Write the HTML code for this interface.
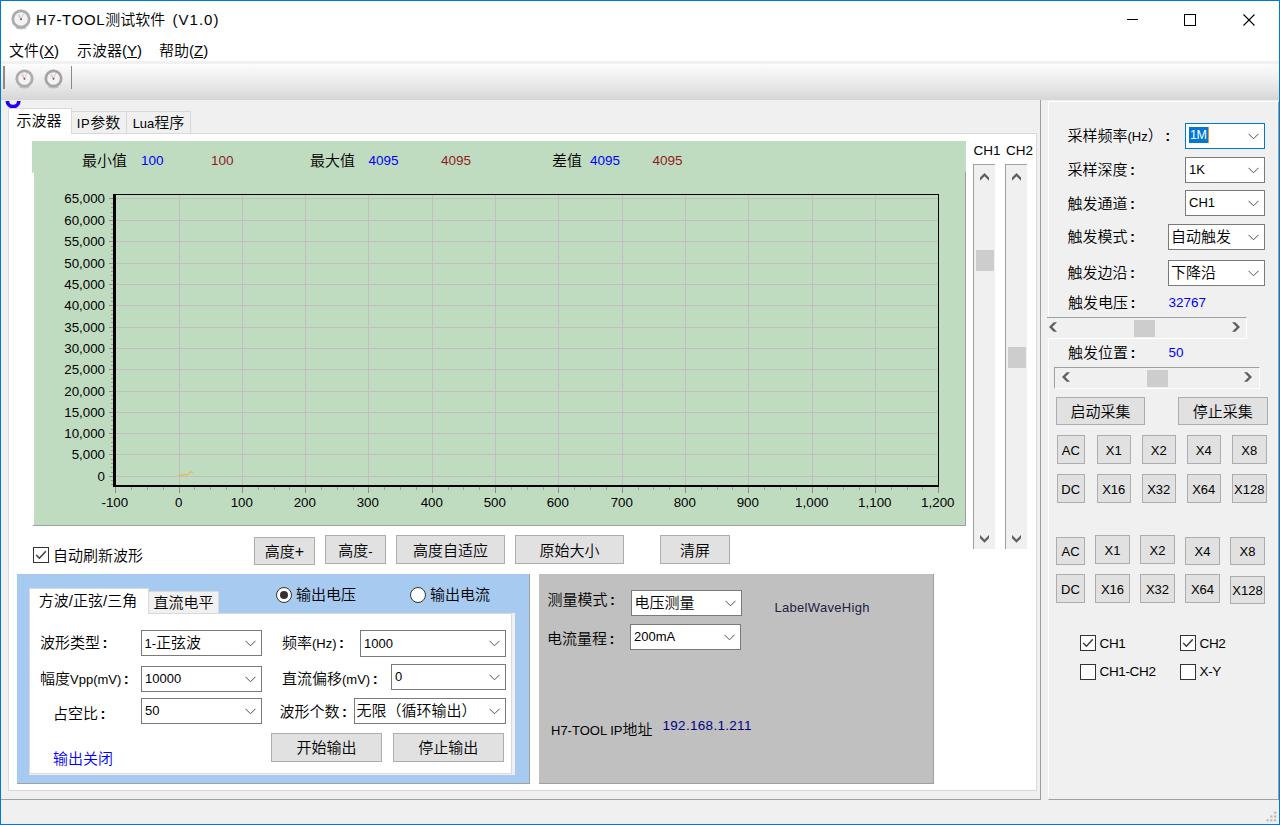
<!DOCTYPE html>
<html lang="zh-CN"><head><meta charset="utf-8"><title>H7-TOOL测试软件 (V1.0)</title>
<style>
*{box-sizing:border-box;margin:0;padding:0}
html,body{width:1280px;height:825px;overflow:hidden;background:#fff}
body{font-weight:350;font-family:"Liberation Sans","Noto Sans CJK SC",sans-serif;color:#000}
#win{position:absolute;left:0;top:0;width:1280px;height:825px;overflow:hidden;background:#fff}
.a{position:absolute}
.t{position:absolute;white-space:nowrap;font-size:15px;line-height:20px;height:20px}
.t i{font-style:normal;font-size:13px}
.t em{font-style:normal;font-size:15px;margin-left:2.5px;font-weight:bold}
.n{position:absolute;white-space:nowrap;font-size:13.5px;line-height:20px;height:20px}
.btn{position:absolute;background:#e1e1e1;border:1px solid #adadad;text-align:center;white-space:nowrap;font-size:15px}
.btn i{font-style:normal;font-size:13px}
.cb{position:absolute;background:#fff;border:1px solid #7a7a7a;white-space:nowrap;font-size:15px;padding-left:3px}
.cb i{font-style:normal;font-size:13px}
.cb svg{position:absolute;right:5px;top:50%;margin-top:-3px}
.chk{position:absolute;width:16px;height:16px;border:1px solid #333;background:#fff}
.rad{position:absolute;width:16px;height:16px;border:1px solid #333;background:#fff;border-radius:50%}
.rad b{position:absolute;left:3px;top:3px;width:8px;height:8px;border-radius:50%;background:#333}
.tab{position:absolute;border:1px solid #d9d9d9;background:#f0f0f0;font-size:15px;white-space:nowrap;text-align:center}
.tab.on{background:#fff;border-bottom:none}
</style></head><body>
<div id="win">
<svg class="a" style="left:11px;top:9.1px" width="20" height="21" viewBox="0 0 20 21"><ellipse cx="10.0" cy="18.8" rx="5.5" ry="1.6" fill="#b4b4b4" opacity=".75"/><circle cx="10.0" cy="10.0" r="9.7" fill="#c8c8c8" opacity=".55"/><circle cx="10.0" cy="10.0" r="8.15" fill="#f3f3f3" stroke="#acacac" stroke-width="2.7"/><path d="M10.0 10.3 L7.9 5.0" stroke="#c9c9c9" stroke-width="1" fill="none"/><path d="M10.0 10.3 L12.5 4.6" stroke="#cfcfcf" stroke-width="1" fill="none"/><path d="M10.3 10.5 L6.4 6.0" stroke="#c07080" stroke-width="0.5" fill="none" opacity=".7"/><circle cx="10.0" cy="10.2" r="0.95" fill="#8a4050"/></svg><div class="t" style="left:36px;top:9.5px;font-size:15px"><span style="letter-spacing:0.65px">H7-TOOL</span>测试软件<span style="margin-left:7.3px;letter-spacing:1px">(V1.0)</span></div>
<svg class="a" style="left:1110px;top:1px" width="169" height="38" viewBox="0 0 169 38" shape-rendering="crispEdges"><path d="M17 18.5 H28" stroke="#000" stroke-width="1"/><rect x="74.5" y="13.5" width="11" height="11" fill="none" stroke="#000" stroke-width="1"/><path d="M133.5 13.5 L144.5 24.5 M144.5 13.5 L133.5 24.5" stroke="#000" stroke-width="1.1" shape-rendering="auto"/></svg>
<div class="t" style="left:9px;top:40.5px;">文件(<u>X</u>)</div>
<div class="t" style="left:77px;top:40.5px;">示波器(<u>Y</u>)</div>
<div class="t" style="left:159px;top:40.5px;">帮助(<u>Z</u>)</div>
<div class="a" style="left:1px;top:61px;width:1278px;height:3px;background:#f1f1f1"></div>
<div class="a" style="left:1px;top:64px;width:1278px;height:36px;background:linear-gradient(#fcfcfc 0%,#f1f1f1 35%,#e4e4e4 68%,#d6d6d6 100%)"></div>
<div class="a" style="left:3px;top:66px;width:2px;height:23px;background:#8a8a8a"></div>
<div class="a" style="left:71px;top:66px;width:1px;height:23px;background:#8a8a8a"></div>
<svg class="a" style="left:15.2px;top:69.3px" width="19" height="20" viewBox="0 0 19 20"><ellipse cx="9.5" cy="17.8" rx="5.2250000000000005" ry="1.6" fill="#b4b4b4" opacity=".75"/><circle cx="9.5" cy="9.5" r="9.2" fill="#c8c8c8" opacity=".55"/><circle cx="9.5" cy="9.5" r="7.65" fill="#f3f3f3" stroke="#acacac" stroke-width="2.7"/><path d="M9.5 9.8 L7.4 4.5" stroke="#c9c9c9" stroke-width="1" fill="none"/><path d="M9.5 9.8 L12.0 4.1" stroke="#cfcfcf" stroke-width="1" fill="none"/><path d="M9.8 10.0 L5.9 5.5" stroke="#c07080" stroke-width="0.5" fill="none" opacity=".7"/><circle cx="9.5" cy="9.7" r="0.95" fill="#8a4050"/></svg><svg class="a" style="left:43.6px;top:69.3px" width="19" height="20" viewBox="0 0 19 20"><ellipse cx="9.5" cy="17.8" rx="5.2250000000000005" ry="1.6" fill="#b4b4b4" opacity=".75"/><circle cx="9.5" cy="9.5" r="9.2" fill="#c8c8c8" opacity=".55"/><circle cx="9.5" cy="9.5" r="7.65" fill="#f3f3f3" stroke="#a4a4a4" stroke-width="2.7"/><path d="M9.5 9.8 L7.4 4.5" stroke="#c9c9c9" stroke-width="1" fill="none"/><path d="M9.5 9.8 L12.0 4.1" stroke="#cfcfcf" stroke-width="1" fill="none"/><path d="M9.8 10.0 L5.9 5.5" stroke="#c07080" stroke-width="0.5" fill="none" opacity=".7"/><circle cx="9.5" cy="9.7" r="0.95" fill="#8a4050"/></svg><div class="a" style="left:1px;top:100px;width:1278px;height:724px;background:#f0f0f0"></div>
<div class="a" style="left:1px;top:100px;width:1040px;height:700px;background:#f0f0f0;border-right:1px solid #a0a0a0;border-bottom:1px solid #a0a0a0"></div>
<svg class="a" style="left:4px;top:101px" width="20" height="10" viewBox="0 0 20 10"><circle cx="9.1" cy="0" r="5.7" fill="none" stroke="#2000ff" stroke-width="3.7"/></svg>
<div class="a" style="left:8px;top:133px;width:1029px;height:658px;background:#fff;border:1px solid #d9d9d9"></div>
<div class="tab on" style="left:8px;top:108px;width:64px;height:26px;line-height:23px;text-indent:-2px">示波器</div>
<div class="tab" style="left:71px;top:111px;width:56px;height:23px;line-height:21px;border-bottom:1px solid #d9d9d9;text-indent:-1px"><i style="font-style:normal;font-size:13px;letter-spacing:0.5px">IP</i>参数</div>
<div class="tab" style="left:126px;top:111px;width:65px;height:23px;line-height:21px;border-bottom:1px solid #d9d9d9"><i style="font-style:normal;font-size:13px">Lua</i>程序</div>
<div class="a" style="left:32px;top:141px;width:934px;height:32px;background:#c0dcc0"></div>
<div class="t" style="left:82px;top:150.5px;">最小值</div>
<div class="n" style="left:141px;top:150.5px;color:#0000ff">100</div>
<div class="n" style="left:211px;top:150.5px;color:#8e1c1c">100</div>
<div class="t" style="left:310px;top:150.5px;">最大值</div>
<div class="n" style="left:368.5px;top:150.5px;color:#0000ff">4095</div>
<div class="n" style="left:441px;top:150.5px;color:#8e1c1c">4095</div>
<div class="t" style="left:552px;top:150.5px;">差值</div>
<div class="n" style="left:590px;top:150.5px;color:#0000ff">4095</div>
<div class="n" style="left:652.5px;top:150.5px;color:#8e1c1c">4095</div>
<svg class="a" style="left:33px;top:172px" width="933" height="354" viewBox="33 172 933 354" shape-rendering="crispEdges" font-family="Liberation Sans, sans-serif" font-size="13.33"><rect x="33" y="172" width="933" height="354" fill="#c0dcc0"/><rect x="33" y="172" width="1" height="354" fill="#fff"/><rect x="965" y="172" width="1" height="354" fill="#a0a0a0"/><rect x="33" y="525" width="933" height="1" fill="#a0a0a0"/><rect x="116" y="476" width="822" height="1" fill="#c0c0c0"/><rect x="116" y="454" width="822" height="1" fill="#c0c0c0"/><rect x="116" y="433" width="822" height="1" fill="#c0c0c0"/><rect x="116" y="412" width="822" height="1" fill="#c0c0c0"/><rect x="116" y="391" width="822" height="1" fill="#c0c0c0"/><rect x="116" y="369" width="822" height="1" fill="#c0c0c0"/><rect x="116" y="348" width="822" height="1" fill="#c0c0c0"/><rect x="116" y="327" width="822" height="1" fill="#c0c0c0"/><rect x="116" y="305" width="822" height="1" fill="#c0c0c0"/><rect x="116" y="284" width="822" height="1" fill="#c0c0c0"/><rect x="116" y="263" width="822" height="1" fill="#c0c0c0"/><rect x="116" y="241" width="822" height="1" fill="#c0c0c0"/><rect x="116" y="220" width="822" height="1" fill="#c0c0c0"/><rect x="116" y="198" width="822" height="1" fill="#c0c0c0"/><rect x="179" y="195" width="1" height="290" fill="#c0c0c0"/><rect x="242" y="195" width="1" height="290" fill="#c0c0c0"/><rect x="305" y="195" width="1" height="290" fill="#c0c0c0"/><rect x="368" y="195" width="1" height="290" fill="#c0c0c0"/><rect x="432" y="195" width="1" height="290" fill="#c0c0c0"/><rect x="495" y="195" width="1" height="290" fill="#c0c0c0"/><rect x="558" y="195" width="1" height="290" fill="#c0c0c0"/><rect x="622" y="195" width="1" height="290" fill="#c0c0c0"/><rect x="685" y="195" width="1" height="290" fill="#c0c0c0"/><rect x="748" y="195" width="1" height="290" fill="#c0c0c0"/><rect x="812" y="195" width="1" height="290" fill="#c0c0c0"/><rect x="875" y="195" width="1" height="290" fill="#c0c0c0"/><rect x="938" y="195" width="1" height="290" fill="#c0c0c0"/><rect x="113" y="194" width="826" height="1" fill="#000"/><rect x="938" y="194" width="1" height="292" fill="#000"/><rect x="113" y="194" width="3" height="293" fill="#000"/><rect x="113" y="485" width="826" height="2" fill="#000"/><rect x="109" y="476" width="4" height="1" fill="#8c8c8c"/><text x="105" y="481.1" text-anchor="end" fill="#000">0</text><rect x="109" y="454" width="4" height="1" fill="#8c8c8c"/><text x="105" y="459.1" text-anchor="end" fill="#000">5,000</text><rect x="109" y="433" width="4" height="1" fill="#8c8c8c"/><text x="105" y="438.1" text-anchor="end" fill="#000">10,000</text><rect x="109" y="412" width="4" height="1" fill="#8c8c8c"/><text x="105" y="417.1" text-anchor="end" fill="#000">15,000</text><rect x="109" y="391" width="4" height="1" fill="#8c8c8c"/><text x="105" y="396.1" text-anchor="end" fill="#000">20,000</text><rect x="109" y="369" width="4" height="1" fill="#8c8c8c"/><text x="105" y="374.1" text-anchor="end" fill="#000">25,000</text><rect x="109" y="348" width="4" height="1" fill="#8c8c8c"/><text x="105" y="353.1" text-anchor="end" fill="#000">30,000</text><rect x="109" y="327" width="4" height="1" fill="#8c8c8c"/><text x="105" y="332.1" text-anchor="end" fill="#000">35,000</text><rect x="109" y="305" width="4" height="1" fill="#8c8c8c"/><text x="105" y="310.1" text-anchor="end" fill="#000">40,000</text><rect x="109" y="284" width="4" height="1" fill="#8c8c8c"/><text x="105" y="289.1" text-anchor="end" fill="#000">45,000</text><rect x="109" y="263" width="4" height="1" fill="#8c8c8c"/><text x="105" y="268.1" text-anchor="end" fill="#000">50,000</text><rect x="109" y="241" width="4" height="1" fill="#8c8c8c"/><text x="105" y="246.1" text-anchor="end" fill="#000">55,000</text><rect x="109" y="220" width="4" height="1" fill="#8c8c8c"/><text x="105" y="225.1" text-anchor="end" fill="#000">60,000</text><rect x="109" y="198" width="4" height="1" fill="#8c8c8c"/><text x="105" y="203.1" text-anchor="end" fill="#000">65,000</text><rect x="111" y="484" width="2" height="1" fill="#9c9c9c"/><rect x="111" y="480" width="2" height="1" fill="#9c9c9c"/><rect x="111" y="472" width="2" height="1" fill="#9c9c9c"/><rect x="111" y="467" width="2" height="1" fill="#9c9c9c"/><rect x="111" y="463" width="2" height="1" fill="#9c9c9c"/><rect x="111" y="459" width="2" height="1" fill="#9c9c9c"/><rect x="111" y="450" width="2" height="1" fill="#9c9c9c"/><rect x="111" y="446" width="2" height="1" fill="#9c9c9c"/><rect x="111" y="442" width="2" height="1" fill="#9c9c9c"/><rect x="111" y="437" width="2" height="1" fill="#9c9c9c"/><rect x="111" y="429" width="2" height="1" fill="#9c9c9c"/><rect x="111" y="425" width="2" height="1" fill="#9c9c9c"/><rect x="111" y="420" width="2" height="1" fill="#9c9c9c"/><rect x="111" y="416" width="2" height="1" fill="#9c9c9c"/><rect x="111" y="408" width="2" height="1" fill="#9c9c9c"/><rect x="111" y="403" width="2" height="1" fill="#9c9c9c"/><rect x="111" y="399" width="2" height="1" fill="#9c9c9c"/><rect x="111" y="395" width="2" height="1" fill="#9c9c9c"/><rect x="111" y="386" width="2" height="1" fill="#9c9c9c"/><rect x="111" y="382" width="2" height="1" fill="#9c9c9c"/><rect x="111" y="378" width="2" height="1" fill="#9c9c9c"/><rect x="111" y="374" width="2" height="1" fill="#9c9c9c"/><rect x="111" y="365" width="2" height="1" fill="#9c9c9c"/><rect x="111" y="361" width="2" height="1" fill="#9c9c9c"/><rect x="111" y="356" width="2" height="1" fill="#9c9c9c"/><rect x="111" y="352" width="2" height="1" fill="#9c9c9c"/><rect x="111" y="344" width="2" height="1" fill="#9c9c9c"/><rect x="111" y="339" width="2" height="1" fill="#9c9c9c"/><rect x="111" y="335" width="2" height="1" fill="#9c9c9c"/><rect x="111" y="331" width="2" height="1" fill="#9c9c9c"/><rect x="111" y="322" width="2" height="1" fill="#9c9c9c"/><rect x="111" y="318" width="2" height="1" fill="#9c9c9c"/><rect x="111" y="314" width="2" height="1" fill="#9c9c9c"/><rect x="111" y="310" width="2" height="1" fill="#9c9c9c"/><rect x="111" y="301" width="2" height="1" fill="#9c9c9c"/><rect x="111" y="297" width="2" height="1" fill="#9c9c9c"/><rect x="111" y="293" width="2" height="1" fill="#9c9c9c"/><rect x="111" y="288" width="2" height="1" fill="#9c9c9c"/><rect x="111" y="280" width="2" height="1" fill="#9c9c9c"/><rect x="111" y="275" width="2" height="1" fill="#9c9c9c"/><rect x="111" y="271" width="2" height="1" fill="#9c9c9c"/><rect x="111" y="267" width="2" height="1" fill="#9c9c9c"/><rect x="111" y="258" width="2" height="1" fill="#9c9c9c"/><rect x="111" y="254" width="2" height="1" fill="#9c9c9c"/><rect x="111" y="250" width="2" height="1" fill="#9c9c9c"/><rect x="111" y="246" width="2" height="1" fill="#9c9c9c"/><rect x="111" y="237" width="2" height="1" fill="#9c9c9c"/><rect x="111" y="233" width="2" height="1" fill="#9c9c9c"/><rect x="111" y="229" width="2" height="1" fill="#9c9c9c"/><rect x="111" y="224" width="2" height="1" fill="#9c9c9c"/><rect x="111" y="216" width="2" height="1" fill="#9c9c9c"/><rect x="111" y="212" width="2" height="1" fill="#9c9c9c"/><rect x="111" y="207" width="2" height="1" fill="#9c9c9c"/><rect x="111" y="203" width="2" height="1" fill="#9c9c9c"/><rect x="115" y="487" width="1" height="6" fill="#8c8c8c"/><text x="114.8" y="507.4" text-anchor="middle" fill="#000">-100</text><rect x="179" y="487" width="1" height="6" fill="#8c8c8c"/><text x="178.8" y="507.4" text-anchor="middle" fill="#000">0</text><rect x="242" y="487" width="1" height="6" fill="#8c8c8c"/><text x="241.8" y="507.4" text-anchor="middle" fill="#000">100</text><rect x="305" y="487" width="1" height="6" fill="#8c8c8c"/><text x="304.8" y="507.4" text-anchor="middle" fill="#000">200</text><rect x="368" y="487" width="1" height="6" fill="#8c8c8c"/><text x="367.8" y="507.4" text-anchor="middle" fill="#000">300</text><rect x="432" y="487" width="1" height="6" fill="#8c8c8c"/><text x="431.8" y="507.4" text-anchor="middle" fill="#000">400</text><rect x="495" y="487" width="1" height="6" fill="#8c8c8c"/><text x="494.8" y="507.4" text-anchor="middle" fill="#000">500</text><rect x="558" y="487" width="1" height="6" fill="#8c8c8c"/><text x="557.8" y="507.4" text-anchor="middle" fill="#000">600</text><rect x="622" y="487" width="1" height="6" fill="#8c8c8c"/><text x="621.8" y="507.4" text-anchor="middle" fill="#000">700</text><rect x="685" y="487" width="1" height="6" fill="#8c8c8c"/><text x="684.8" y="507.4" text-anchor="middle" fill="#000">800</text><rect x="748" y="487" width="1" height="6" fill="#8c8c8c"/><text x="747.8" y="507.4" text-anchor="middle" fill="#000">900</text><rect x="812" y="487" width="1" height="6" fill="#8c8c8c"/><text x="811.8" y="507.4" text-anchor="middle" fill="#000">1,000</text><rect x="875" y="487" width="1" height="6" fill="#8c8c8c"/><text x="874.8" y="507.4" text-anchor="middle" fill="#000">1,100</text><rect x="938" y="487" width="1" height="6" fill="#8c8c8c"/><text x="937.8" y="507.4" text-anchor="middle" fill="#000">1,200</text><rect x="131" y="487" width="1" height="3" fill="#9c9c9c"/><rect x="147" y="487" width="1" height="3" fill="#9c9c9c"/><rect x="163" y="487" width="1" height="3" fill="#9c9c9c"/><rect x="194" y="487" width="1" height="3" fill="#9c9c9c"/><rect x="210" y="487" width="1" height="3" fill="#9c9c9c"/><rect x="226" y="487" width="1" height="3" fill="#9c9c9c"/><rect x="258" y="487" width="1" height="3" fill="#9c9c9c"/><rect x="274" y="487" width="1" height="3" fill="#9c9c9c"/><rect x="289" y="487" width="1" height="3" fill="#9c9c9c"/><rect x="321" y="487" width="1" height="3" fill="#9c9c9c"/><rect x="337" y="487" width="1" height="3" fill="#9c9c9c"/><rect x="353" y="487" width="1" height="3" fill="#9c9c9c"/><rect x="384" y="487" width="1" height="3" fill="#9c9c9c"/><rect x="400" y="487" width="1" height="3" fill="#9c9c9c"/><rect x="416" y="487" width="1" height="3" fill="#9c9c9c"/><rect x="448" y="487" width="1" height="3" fill="#9c9c9c"/><rect x="463" y="487" width="1" height="3" fill="#9c9c9c"/><rect x="479" y="487" width="1" height="3" fill="#9c9c9c"/><rect x="511" y="487" width="1" height="3" fill="#9c9c9c"/><rect x="527" y="487" width="1" height="3" fill="#9c9c9c"/><rect x="543" y="487" width="1" height="3" fill="#9c9c9c"/><rect x="574" y="487" width="1" height="3" fill="#9c9c9c"/><rect x="590" y="487" width="1" height="3" fill="#9c9c9c"/><rect x="606" y="487" width="1" height="3" fill="#9c9c9c"/><rect x="638" y="487" width="1" height="3" fill="#9c9c9c"/><rect x="653" y="487" width="1" height="3" fill="#9c9c9c"/><rect x="669" y="487" width="1" height="3" fill="#9c9c9c"/><rect x="701" y="487" width="1" height="3" fill="#9c9c9c"/><rect x="717" y="487" width="1" height="3" fill="#9c9c9c"/><rect x="732" y="487" width="1" height="3" fill="#9c9c9c"/><rect x="764" y="487" width="1" height="3" fill="#9c9c9c"/><rect x="780" y="487" width="1" height="3" fill="#9c9c9c"/><rect x="796" y="487" width="1" height="3" fill="#9c9c9c"/><rect x="827" y="487" width="1" height="3" fill="#9c9c9c"/><rect x="843" y="487" width="1" height="3" fill="#9c9c9c"/><rect x="859" y="487" width="1" height="3" fill="#9c9c9c"/><rect x="891" y="487" width="1" height="3" fill="#9c9c9c"/><rect x="907" y="487" width="1" height="3" fill="#9c9c9c"/><rect x="922" y="487" width="1" height="3" fill="#9c9c9c"/><path d="M178.7 474.3 L180 476.2 L181.5 475 L187.5 474.8 L189.5 473 L191.3 471.6 L193.2 473.6" fill="none" stroke="#ffa500" stroke-width="0.9" shape-rendering="auto"/></svg>
<div class="n" style="left:973.5px;top:140.5px;">CH1</div>
<div class="n" style="left:1006px;top:140.5px;">CH2</div>
<div class="a" style="left:973px;top:164px;width:22px;height:385px;background:#f0f0f0;border-left:1px solid #a0a0a0;border-top:1px solid #a0a0a0"></div>
<div class="a" style="left:976px;top:250px;width:18px;height:21px;background:#cdcdcd"></div>
<svg class="a" style="left:980px;top:172.5px" width="9" height="8" viewBox="0 0 9 8"><polygon points="4.5,0 9,4.5 9,7.8 4.5,3.3 0,7.8 0,4.5" fill="#606060"/></svg><svg class="a" style="left:980px;top:535px" width="9" height="8" viewBox="0 0 9 8"><polygon points="4.5,7.8 9,3.3 9,0 4.5,4.5 0,0 0,3.3" fill="#606060"/></svg><div class="a" style="left:1005px;top:164px;width:22px;height:385px;background:#f0f0f0;border-left:1px solid #a0a0a0;border-top:1px solid #a0a0a0"></div>
<div class="a" style="left:1008px;top:346.5px;width:18px;height:21px;background:#cdcdcd"></div>
<svg class="a" style="left:1012px;top:172.5px" width="9" height="8" viewBox="0 0 9 8"><polygon points="4.5,0 9,4.5 9,7.8 4.5,3.3 0,7.8 0,4.5" fill="#606060"/></svg><svg class="a" style="left:1012px;top:535px" width="9" height="8" viewBox="0 0 9 8"><polygon points="4.5,7.8 9,3.3 9,0 4.5,4.5 0,0 0,3.3" fill="#606060"/></svg><div class="chk" style="left:33px;top:547px"><svg class="a" style="left:0;top:0" width="14" height="14" viewBox="0 0 14 14"><path d="M2.2 7 L5.4 10.2 L11.8 3.2" fill="none" stroke="#3c3c3c" stroke-width="1.5"/></svg></div>
<div class="t" style="left:53px;top:545.5px;">自动刷新波形</div>
<div class="btn" style="left:254px;top:537px;width:61px;height:28px;line-height:26px;padding-top:1px;">高度<i style="font-size:16px">+</i></div>
<div class="btn" style="left:325px;top:535px;width:61px;height:29px;line-height:27px;padding-top:1px;">高度<i>-</i></div>
<div class="btn" style="left:396px;top:535px;width:109px;height:29px;line-height:27px;padding-top:1px;">高度自适应</div>
<div class="btn" style="left:515px;top:535px;width:109px;height:29px;line-height:27px;padding-top:1px;">原始大小</div>
<div class="btn" style="left:660px;top:535px;width:70px;height:29px;line-height:27px;padding-top:1px;">清屏</div>
<div class="a" style="left:17px;top:574px;width:513px;height:210px;background:#a6caf0;border-right:1px solid #a0a0a0;border-bottom:1px solid #a0a0a0"></div>
<div class="a" style="left:29px;top:613px;width:486px;height:162px;background:#f0f0f0"></div>
<div class="a" style="left:29px;top:613px;width:483px;height:161px;background:#fff;border:1px solid #d9d9d9"></div>
<div class="tab on" style="left:29px;top:588px;width:120px;height:26px;line-height:23px;text-indent:-2px">方波/正弦/三角</div>
<div class="tab" style="left:148px;top:591px;width:71px;height:22px;line-height:21px;border-bottom:none">直流电平</div>
<div class="rad" style="left:276px;top:586.5px"><b></b></div>
<div class="t" style="left:296px;top:585px;">输出电压</div>
<div class="rad" style="left:410px;top:586.5px"></div>
<div class="t" style="left:430px;top:585px;">输出电流</div>
<div class="t" style="left:40px;top:633px;">波形类型<em>:</em></div>
<div class="t" style="left:40px;top:669px;">幅度<i>Vpp(mV)</i><em>:</em></div>
<div class="t" style="left:53px;top:704px;">占空比<em>:</em></div>
<div class="cb" style="left:141px;top:630px;width:121px;height:26px;line-height:24px;padding-left:2.5px;"><i>1-</i>正弦波<svg width="11" height="7" viewBox="0 0 11 7"><path d="M0.5 0.8 L5.5 5.8 L10.5 0.8" fill="none" stroke="#505050" stroke-width="1"/></svg></div>
<div class="cb" style="left:141px;top:666px;width:121px;height:26px;line-height:24px;line-height:22.5px;"><i>10000</i><svg width="11" height="7" viewBox="0 0 11 7"><path d="M0.5 0.8 L5.5 5.8 L10.5 0.8" fill="none" stroke="#505050" stroke-width="1"/></svg></div>
<div class="cb" style="left:141px;top:698px;width:121px;height:26px;line-height:24px;line-height:22.5px;line-height:21.5px"><i>50</i><svg width="11" height="7" viewBox="0 0 11 7"><path d="M0.5 0.8 L5.5 5.8 L10.5 0.8" fill="none" stroke="#505050" stroke-width="1"/></svg></div>
<div class="t" style="left:282px;top:633px;">频率<i>(Hz)</i><em>:</em></div>
<div class="t" style="left:282px;top:669px;">直流偏移<i>(mV)</i><em>:</em></div>
<div class="t" style="left:279.5px;top:702px;">波形个数<em>:</em></div>
<div class="cb" style="left:360px;top:630px;width:146px;height:26.5px;line-height:24.5px;line-height:23.0px;"><i>1000</i><svg width="11" height="7" viewBox="0 0 11 7"><path d="M0.5 0.8 L5.5 5.8 L10.5 0.8" fill="none" stroke="#505050" stroke-width="1"/></svg></div>
<div class="cb" style="left:391px;top:664px;width:115px;height:26px;line-height:24px;line-height:22.5px;"><i>0</i><svg width="11" height="7" viewBox="0 0 11 7"><path d="M0.5 0.8 L5.5 5.8 L10.5 0.8" fill="none" stroke="#505050" stroke-width="1"/></svg></div>
<div class="cb" style="left:353.5px;top:698px;width:152.5px;height:26px;line-height:24px;padding-left:2.5px;padding-left:2px">无限（循环输出）<svg width="11" height="7" viewBox="0 0 11 7"><path d="M0.5 0.8 L5.5 5.8 L10.5 0.8" fill="none" stroke="#505050" stroke-width="1"/></svg></div>
<div class="btn" style="left:271px;top:733px;width:111px;height:28.5px;line-height:26.5px;padding-top:1px;">开始输出</div>
<div class="btn" style="left:392.5px;top:733px;width:111.5px;height:28.5px;line-height:26.5px;padding-top:1px;">停止输出</div>
<div class="t" style="left:53px;top:749px;color:#0000ff">输出关闭</div>
<div class="a" style="left:539px;top:574px;width:395px;height:210px;background:#c0c0c0;border-right:1px solid #a0a0a0;border-bottom:1px solid #a0a0a0"></div>
<div class="t" style="left:547.5px;top:590px;">测量模式<em>:</em></div>
<div class="t" style="left:547px;top:628.5px;">电流量程<em>:</em></div>
<div class="cb" style="left:631px;top:590px;width:111px;height:26px;line-height:24px;padding-left:2.5px;">电压测量<svg width="11" height="7" viewBox="0 0 11 7"><path d="M0.5 0.8 L5.5 5.8 L10.5 0.8" fill="none" stroke="#505050" stroke-width="1"/></svg></div>
<div class="cb" style="left:630px;top:624px;width:111px;height:26px;line-height:24px;line-height:22.5px;"><i>200mA</i><svg width="11" height="7" viewBox="0 0 11 7"><path d="M0.5 0.8 L5.5 5.8 L10.5 0.8" fill="none" stroke="#505050" stroke-width="1"/></svg></div>
<div class="n" style="left:774.5px;top:598px;color:#202040;font-size:13px;letter-spacing:0.3px">LabelWaveHigh</div>
<div class="t" style="left:551px;top:719.5px;"><i>H7-TOOL IP</i>地址</div>
<div class="n" style="left:662.5px;top:715.5px;color:#000080;letter-spacing:0.3px">192.168.1.211</div>
<div class="a" style="left:1048px;top:101px;width:231px;height:699px;background:#f0f0f0;border-left:1px solid #fff;border-top:1px solid #fff;border-right:1px solid #a0a0a0;border-bottom:1px solid #a0a0a0"></div>
<div class="t" style="left:1067.5px;top:125.5px;">采样频率<i>(Hz</i>）<em>:</em></div>
<div class="t" style="left:1067.5px;top:159.5px;">采样深度<em>:</em></div>
<div class="t" style="left:1067.5px;top:193.5px;">触发通道<em>:</em></div>
<div class="t" style="left:1067.5px;top:227px;">触发模式<em>:</em></div>
<div class="t" style="left:1067.5px;top:263px;">触发边沿<em>:</em></div>
<div class="t" style="left:1068px;top:292.5px;">触发电压<em>:</em></div>
<div class="t" style="left:1068px;top:342.5px;">触发位置<em>:</em></div>
<div class="cb" style="left:1185px;top:123px;width:80px;height:26px;line-height:24px;line-height:22.5px;border-color:#0078d7;line-height:22.5px"><span style="background:#0078d7;color:#fff;display:inline-block;height:16px;line-height:16px;padding:0 1px 0 1px;margin-left:0px;vertical-align:middle;font-size:12.5px;letter-spacing:-0.4px;margin-top:-3px;border-right:1px solid #e8923c">1M</span><svg width="11" height="7" viewBox="0 0 11 7"><path d="M0.5 0.8 L5.5 5.8 L10.5 0.8" fill="none" stroke="#505050" stroke-width="1"/></svg></div>
<div class="cb" style="left:1185px;top:157px;width:80px;height:25.5px;line-height:23.5px;line-height:22.0px;"><i>1K</i><svg width="11" height="7" viewBox="0 0 11 7"><path d="M0.5 0.8 L5.5 5.8 L10.5 0.8" fill="none" stroke="#505050" stroke-width="1"/></svg></div>
<div class="cb" style="left:1185px;top:190px;width:80px;height:26px;line-height:24px;line-height:22.5px;"><i>CH1</i><svg width="11" height="7" viewBox="0 0 11 7"><path d="M0.5 0.8 L5.5 5.8 L10.5 0.8" fill="none" stroke="#505050" stroke-width="1"/></svg></div>
<div class="cb" style="left:1167.5px;top:224px;width:97.5px;height:26px;line-height:24px;padding-left:2.5px;">自动触发<svg width="11" height="7" viewBox="0 0 11 7"><path d="M0.5 0.8 L5.5 5.8 L10.5 0.8" fill="none" stroke="#505050" stroke-width="1"/></svg></div>
<div class="cb" style="left:1167.5px;top:260px;width:97.5px;height:26px;line-height:24px;padding-left:2.5px;">下降沿<svg width="11" height="7" viewBox="0 0 11 7"><path d="M0.5 0.8 L5.5 5.8 L10.5 0.8" fill="none" stroke="#505050" stroke-width="1"/></svg></div>
<div class="n" style="left:1168.5px;top:292.5px;color:#0000ff">32767</div>
<div class="n" style="left:1168.5px;top:342.5px;color:#0000ff">50</div>
<div class="a" style="left:1047px;top:317px;width:200px;height:22px;background:#f0f0f0;border-top:1px solid #a0a0a0;border-bottom:1px solid #fff;border-right:1px solid #fff"></div>
<div class="a" style="left:1134px;top:319.5px;width:21px;height:17px;background:#cdcdcd"></div>
<svg class="a" style="left:1048.75px;top:322.3px" width="8" height="10" viewBox="0 0 8 9.4"><polygon points="0,4.7 4.7,0 8,0 3.3,4.7 8,9.4 4.7,9.4" fill="#606060"/></svg><svg class="a" style="left:1231.75px;top:322.3px" width="8" height="10" viewBox="0 0 8 9.4"><polygon points="8,4.7 3.3,0 0,0 4.7,4.7 0,9.4 3.3,9.4" fill="#606060"/></svg><div class="a" style="left:1054px;top:367px;width:206px;height:22px;background:#f0f0f0;border-top:1px solid #a0a0a0;border-left:1px solid #a0a0a0;border-bottom:1px solid #fff;border-right:1px solid #fff"></div>
<div class="a" style="left:1146.5px;top:369.5px;width:21px;height:17px;background:#cdcdcd"></div>
<svg class="a" style="left:1061.5px;top:372.3px" width="8" height="10" viewBox="0 0 8 9.4"><polygon points="0,4.7 4.7,0 8,0 3.3,4.7 8,9.4 4.7,9.4" fill="#606060"/></svg><svg class="a" style="left:1244.25px;top:372.3px" width="8" height="10" viewBox="0 0 8 9.4"><polygon points="8,4.7 3.3,0 0,0 4.7,4.7 0,9.4 3.3,9.4" fill="#606060"/></svg><div class="btn" style="left:1056px;top:397px;width:89px;height:28px;line-height:26px;padding-top:1px;">启动采集</div>
<div class="btn" style="left:1178px;top:397px;width:89.5px;height:28px;line-height:26px;padding-top:1px;">停止采集</div>
<div class="btn" style="left:1056.5px;top:435px;width:28.5px;height:28.5px;line-height:26.5px;padding-top:1px;font-size:13px;padding-top:1.5px">AC</div>
<div class="btn" style="left:1096.5px;top:435px;width:34.5px;height:28.5px;line-height:26.5px;padding-top:1px;font-size:13px;padding-top:1.5px">X1</div>
<div class="btn" style="left:1141.5px;top:435px;width:34.5px;height:28.5px;line-height:26.5px;padding-top:1px;font-size:13px;padding-top:1.5px">X2</div>
<div class="btn" style="left:1186.5px;top:435px;width:34.5px;height:28.5px;line-height:26.5px;padding-top:1px;font-size:13px;padding-top:1.5px">X4</div>
<div class="btn" style="left:1232px;top:435px;width:34.5px;height:28.5px;line-height:26.5px;padding-top:1px;font-size:13px;padding-top:1.5px">X8</div>
<div class="btn" style="left:1056.5px;top:474px;width:28.5px;height:28.5px;line-height:26.5px;padding-top:1px;font-size:13px;padding-top:1.5px">DC</div>
<div class="btn" style="left:1096.5px;top:474px;width:34.5px;height:28.5px;line-height:26.5px;padding-top:1px;font-size:13px;padding-top:1.5px">X16</div>
<div class="btn" style="left:1141.5px;top:474px;width:34.5px;height:28.5px;line-height:26.5px;padding-top:1px;font-size:13px;padding-top:1.5px">X32</div>
<div class="btn" style="left:1186.5px;top:474px;width:34.5px;height:28.5px;line-height:26.5px;padding-top:1px;font-size:13px;padding-top:1.5px">X64</div>
<div class="btn" style="left:1232px;top:474px;width:34.5px;height:28.5px;line-height:26.5px;padding-top:1px;font-size:13px;padding-top:1.5px">X128</div>
<div class="btn" style="left:1056px;top:536.5px;width:29px;height:28.5px;line-height:26.5px;padding-top:1px;font-size:13px;padding-top:1.5px">AC</div>
<div class="btn" style="left:1095px;top:535px;width:35px;height:28.5px;line-height:26.5px;padding-top:1px;font-size:13px;padding-top:1.5px">X1</div>
<div class="btn" style="left:1140px;top:535px;width:35px;height:28.5px;line-height:26.5px;padding-top:1px;font-size:13px;padding-top:1.5px">X2</div>
<div class="btn" style="left:1185px;top:536.5px;width:35px;height:28.5px;line-height:26.5px;padding-top:1px;font-size:13px;padding-top:1.5px">X4</div>
<div class="btn" style="left:1230px;top:536.5px;width:35px;height:28.5px;line-height:26.5px;padding-top:1px;font-size:13px;padding-top:1.5px">X8</div>
<div class="btn" style="left:1056px;top:574px;width:29px;height:28.5px;line-height:26.5px;padding-top:1px;font-size:13px;padding-top:1.5px">DC</div>
<div class="btn" style="left:1095px;top:574px;width:35px;height:28.5px;line-height:26.5px;padding-top:1px;font-size:13px;padding-top:1.5px">X16</div>
<div class="btn" style="left:1140px;top:574px;width:35px;height:28.5px;line-height:26.5px;padding-top:1px;font-size:13px;padding-top:1.5px">X32</div>
<div class="btn" style="left:1185px;top:574px;width:35px;height:28.5px;line-height:26.5px;padding-top:1px;font-size:13px;padding-top:1.5px">X64</div>
<div class="btn" style="left:1230px;top:575.5px;width:35px;height:28.5px;line-height:26.5px;padding-top:1px;font-size:13px;padding-top:1.5px">X128</div>
<div class="chk" style="left:1080px;top:635px"><svg class="a" style="left:0;top:0" width="14" height="14" viewBox="0 0 14 14"><path d="M2.2 7 L5.4 10.2 L11.8 3.2" fill="none" stroke="#3c3c3c" stroke-width="1.5"/></svg></div>
<div class="n" style="left:1099.5px;top:633.5px;letter-spacing:-0.35px">CH1</div>
<div class="chk" style="left:1180px;top:635px"><svg class="a" style="left:0;top:0" width="14" height="14" viewBox="0 0 14 14"><path d="M2.2 7 L5.4 10.2 L11.8 3.2" fill="none" stroke="#3c3c3c" stroke-width="1.5"/></svg></div>
<div class="n" style="left:1199.5px;top:633.5px;letter-spacing:-0.35px">CH2</div>
<div class="chk" style="left:1080px;top:664px"></div>
<div class="n" style="left:1099.5px;top:662px;letter-spacing:-0.35px">CH1-CH2</div>
<div class="chk" style="left:1180px;top:664px"></div>
<div class="n" style="left:1199.5px;top:662px;letter-spacing:-0.35px">X-Y</div>
<div class="a" style="left:1px;top:800px;width:1278px;height:24px;background:#f0f0f0"></div>
<svg class="a" style="left:1264px;top:808px" width="14" height="16" viewBox="1264 808 14 16"><rect x="1274" y="811.6" width="2.3" height="2.3" fill="#bdbdbd"/><rect x="1270.2" y="815.4" width="2.3" height="2.3" fill="#bdbdbd"/><rect x="1274" y="815.4" width="2.3" height="2.3" fill="#bdbdbd"/><rect x="1266.4" y="819.2" width="2.3" height="2.3" fill="#bdbdbd"/><rect x="1270.2" y="819.2" width="2.3" height="2.3" fill="#bdbdbd"/><rect x="1274" y="819.2" width="2.3" height="2.3" fill="#bdbdbd"/></svg>
<div class="a" style="left:0px;top:0px;width:1280px;height:825px;border:1px solid #0078d7;pointer-events:none"></div>
</div>
</body></html>
